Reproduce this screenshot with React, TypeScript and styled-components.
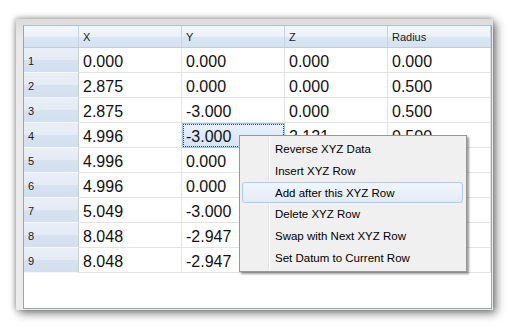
import React from 'react';
import styled, { createGlobalStyle } from 'styled-components';

const GlobalStyle = createGlobalStyle`
  html, body {
    margin: 0;
    padding: 0;
    background: #ffffff;
  }
  body {
    font-family: "Liberation Sans", Arial, sans-serif;
  }
`;

type Row = [string, string, string, string];

// Z / Radius of rows 5-9 sit under the context menu, so they're left blank
const rows: Row[] = [
  ['0.000', '0.000', '0.000', '0.000'],
  ['2.875', '0.000', '0.000', '0.500'],
  ['2.875', '-3.000', '0.000', '0.500'],
  ['4.996', '-3.000', '2.121', '0.500'],
  ['4.996', '0.000', '', ''],
  ['4.996', '0.000', '', ''],
  ['5.049', '-3.000', '', ''],
  ['8.048', '-2.947', '', ''],
  ['8.048', '-2.947', '', ''],
];

const columns = ['X', 'Y', 'Z', 'Radius'];

const menuItems = [
  'Reverse XYZ Data',
  'Insert XYZ Row',
  'Add after this XYZ Row',
  'Delete XYZ Row',
  'Swap with Next XYZ Row',
  'Set Datum to Current Row',
];

const App = () => {
  return (
    <Page>
      <GlobalStyle />
      <Window>
        <Table>
          <Grid>
            <Corner />
            {columns.map((c) => (
              <HeadCell key={c}>{c}</HeadCell>
            ))}
            {rows.map((r, i) => (
              <React.Fragment key={i}>
                <RowHead>{i + 1}</RowHead>
                {r.map((v, j) => (
                  <Cell key={j} selected={i === 3 && j === 1}>
                    {v}
                  </Cell>
                ))}
              </React.Fragment>
            ))}
          </Grid>
          <Menu>
            <Gutter />
            {menuItems.map((m, i) => (
              <MenuItem key={m} active={i === 2}>
                {m}
              </MenuItem>
            ))}
          </Menu>
        </Table>
      </Window>
    </Page>
  );
};

const Page = styled.div`
  width: 514px;
  height: 329px;
  padding: 19px 0 0 16px;
  box-sizing: border-box;
  background: #fff;
`;

const Window = styled.div`
  width: 477px;
  height: 291px;
  box-sizing: border-box;
  padding: 6px 1px 1px 7px;
  background: linear-gradient(#dcdcdc, #e9e9e9 20px, #ececec);
  box-shadow: 3px 3px 9px rgba(0, 0, 0, 0.55), -1px -1px 5px rgba(0, 0, 0, 0.25);
`;

const Table = styled.div`
  position: relative;
  width: 469px;
  height: 284px;
  box-sizing: border-box;
  border: 1px solid #9aa3ae;
  border-top-color: #a9bfd6;
  background: #ffffff;
  overflow: hidden;
`;

const Grid = styled.div`
  display: grid;
  grid-template-columns: 55px repeat(4, 103px);
  grid-auto-rows: 25px;
  grid-template-rows: 22px;
`;

const Corner = styled.div`
  box-sizing: border-box;
  border-right: 1px solid #c9d3df;
  border-bottom: 1px solid #c2ccd8;
  background: linear-gradient(#f4f8fc, #eaf1f9 50%, #dbe6f3 51%, #d6e2f1);
`;

const HeadCell = styled.div`
  box-sizing: border-box;
  border-right: 1px solid #c9d3df;
  border-bottom: 1px solid #c2ccd8;
  background: linear-gradient(#f4f8fc, #eaf1f9 50%, #dbe6f3 51%, #d6e2f1);
  font-size: 11px;
  color: #1b1b1b;
  padding: 5px 0 0 4px;
`;

const RowHead = styled.div`
  box-sizing: border-box;
  border-right: 1px solid #c5cfdb;
  border-bottom: 1px solid #f4f7fb;
  background: linear-gradient(#e9eff7, #e4ebf5 50%, #d7e2f0 51%, #d3dfee);
  font-size: 11px;
  color: #1b1b1b;
  padding: 7px 0 0 4px;
`;

const Cell = styled.div<{ selected?: boolean }>`
  box-sizing: border-box;
  border-right: 1px solid #e3e3e3;
  border-bottom: 1px solid #e3e3e3;
  font-size: 16px;
  color: #111;
  padding: 5px 0 0 4px;
  white-space: nowrap;
  ${(p) =>
    p.selected &&
    `
    background: linear-gradient(#eaf2fc, #d3e4f8);
    outline: 1px dotted #404040;
    outline-offset: -2px;
    border: 1px solid #9ec1ea;
    padding: 4px 0 0 3px;
  `}
`;

const Menu = styled.div`
  position: absolute;
  left: 215px;
  top: 109px;
  width: 228px;
  height: 137px;
  box-sizing: border-box;
  border: 1px solid #979797;
  background: #f0f0f0;
  padding: 2px 3px 2px 2px;
  box-shadow: 2px 2px 2px rgba(0, 0, 0, 0.4);
  display: flex;
  flex-direction: column;
`;

const Gutter = styled.div`
  position: absolute;
  left: 28px;
  top: 1px;
  bottom: 1px;
  width: 1px;
  background: #e2e3e3;
  border-right: 1px solid #ffffff;
`;

const MenuItem = styled.div<{ active?: boolean }>`
  position: relative;
  height: 22px;
  box-sizing: border-box;
  display: flex;
  align-items: center;
  padding-left: 32px;
  font-size: 11.5px;
  color: #000;
  border: 1px solid transparent;
  border-radius: 3px;
  ${(p) =>
    p.active &&
    `
    border-color: #aecbef;
    background: linear-gradient(#f1f6fc, #e1ebf7);
  `}
`;

export default App;
